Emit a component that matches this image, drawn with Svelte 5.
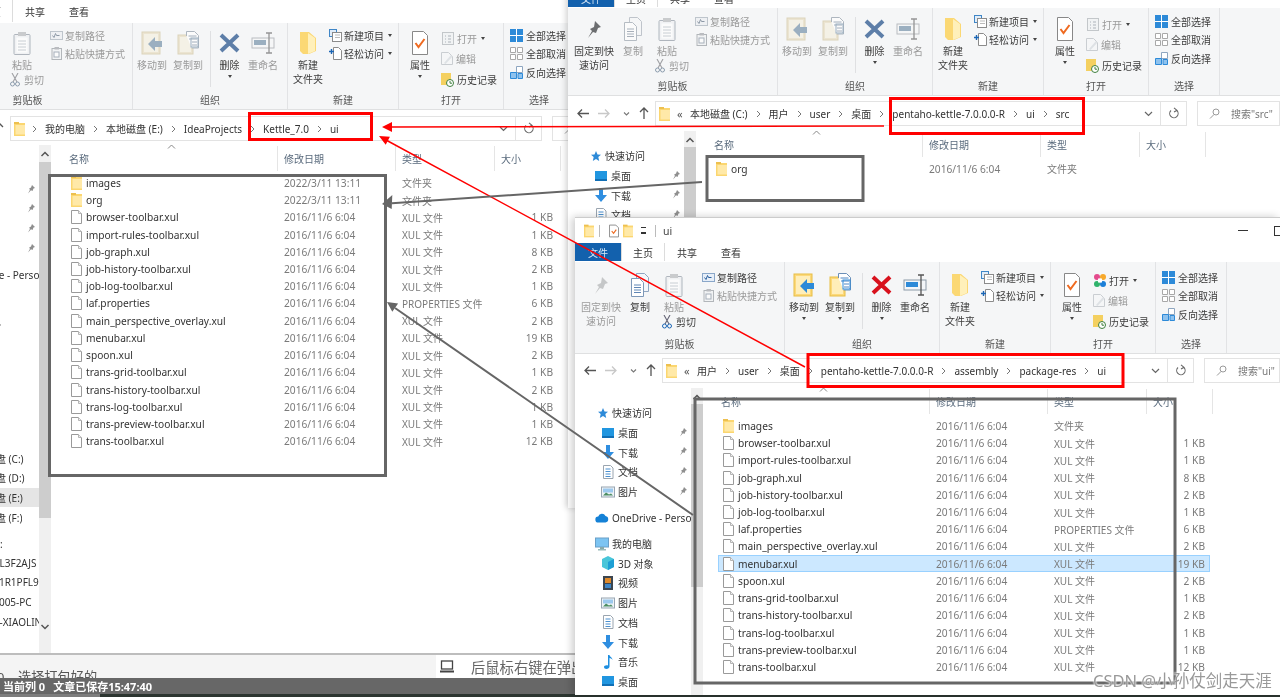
<script>
  const names = [
    ['browser-toolbar.xul','1 KB'],['import-rules-toolbar.xul','1 KB'],['job-graph.xul','8 KB'],
    ['job-history-toolbar.xul','2 KB'],['job-log-toolbar.xul','1 KB'],['laf.properties','6 KB','PROPERTIES 文件'],
    ['main_perspective_overlay.xul','2 KB'],['menubar.xul','19 KB'],['spoon.xul','2 KB'],
    ['trans-grid-toolbar.xul','1 KB'],['trans-history-toolbar.xul','2 KB'],['trans-log-toolbar.xul','1 KB'],
    ['trans-preview-toolbar.xul','1 KB'],['trans-toolbar.xul','12 KB']
  ];
  const D = '2016/11/6 6:04';
  const fileRows = names.map(([n, s, t]) => ({ n, s, t: t || 'XUL 文件', d: D, f: false }));
  const rowsA = [
    { n:'images', d:'2022/3/11 13:11', t:'文件夹', s:'', f:true },
    { n:'org', d:'2022/3/11 13:11', t:'文件夹', s:'', f:true },
    ...fileRows
  ];
  const rowsB = [{ n:'org', d:D, t:'文件夹', s:'', f:true }];
  const rowsC = [{ n:'images', d:D, t:'文件夹', s:'', f:true }, ...fileRows];

  const navBase = [
    { t:'快速访问', i:'star', l:1, w:13, h:12 },
    { t:'桌面', i:'desk', l:2, p:1 },
    { t:'下载', i:'down', l:2, p:1 },
    { t:'文档', i:'docs', l:2, p:1 },
    { t:'图片', i:'pics', l:2, p:1 },
    { t:'OneDrive - Personal', i:'cloud', l:1, g:1 },
    { t:'我的电脑', i:'pc', l:1, g:1 },
    { t:'3D 对象', i:'cube', l:2 },
    { t:'视频', i:'film', l:2 },
    { t:'图片', i:'pics', l:2 },
    { t:'文档', i:'docs', l:2 },
    { t:'下载', i:'down', l:2 },
    { t:'音乐', i:'music', l:2 },
    { t:'桌面', i:'desk', l:2 }
  ];
  const navA = [
    ...navBase,
    { t:'本地磁盘 (C:)', l:2 },{ t:'本地磁盘 (D:)', l:2 },{ t:'本地磁盘 (E:)', l:2, s:1 },{ t:'本地磁盘 (F:)', l:2 },
    { t:'网络位置:', l:1, g:1 },
    { t:'DESK-5L3F2AJS', l:2 },{ t:'DESKT-1R1PFL9', l:2 },{ t:'DESKT-005-PC', l:2 },{ t:'DESKTI-XIAOLIN', l:2 }
  ];

  const win = [
    { k:'wa', on:false, title:false, rows:rowsA, nav:navA, pre:'›', crumbs:['我的电脑','本地磁盘 (E:)','IdeaProjects','Kettle_7.0','ui'], q:'搜索"ui"', sel:'' },
    { k:'wb', on:false, title:true, rows:rowsB, nav:navBase, pre:'«', crumbs:['本地磁盘 (C:)','用户','user','桌面','pentaho-kettle-7.0.0.0-R','ui','src'], q:'搜索"src"', sel:'' },
    { k:'wc', on:true, title:true, rows:rowsC, nav:navBase, pre:'«', crumbs:['用户','user','桌面','pentaho-kettle-7.0.0.0-R','assembly','package-res','ui'], q:'搜索"ui"', sel:'menubar.xul' }
  ];
</script>

{#snippet ic(name, w, h)}
  <svg class="ic" width={w} height={h}><use href={'#' + name} /></svg>
{/snippet}

{#snippet big(cls, name, w, h, label, dim, caret, label2)}
  <div class="lg {cls}" class:dim>
    <div class="ib">{@render ic(name, w, h)}</div>
    <div class="t">{label}</div>
    {#if label2}<div class="t t2">{label2}</div>{/if}
    {#if caret}<span class="car"></span>{/if}
  </div>
{/snippet}

{#snippet small(name, label, dim, caret)}
  <div class="r" class:dim>
    <span class="slot">{@render ic(name, 13, 13)}</span><span>{label}</span>
    {#if caret}<span class="car rc"></span>{/if}
  </div>
{/snippet}

{#snippet ribbon(on)}
  <div class="ribbon">
    <section class="grp g1">
      <div class="gb">
        {@render big('w52', on ? 'pin' : 'pindark', 16, 19, '固定到快', on, false, '速访问')}
        {@render big('w26', 'copy', 20, 24, '复制', !on)}
        <div class="lg w42 dim">
          <div class="ib">{@render ic('paste', 18, 24)}</div>
          <div class="t">粘贴</div>
          <div class="cut" class:dim={!on} class:live={on}>
            {@render ic('cut', 10, 14)}<span>剪切</span>
          </div>
        </div>
        <div class="sm ml7">
          {@render small('cpath', '复制路径', !on)}
          {@render small('pshort', '粘贴快捷方式', true)}
        </div>
      </div>
      <div class="gl">剪贴板</div>
    </section>
    <section class="grp g2">
      <div class="gb">
        {@render big('w38', 'move', 22, 24, '移动到', !on, on)}
        {@render big('w34', 'cpto', 22, 24, '复制到', !on, on)}
        <span class="vsep"></span>
        <div class="lg w37 {on ? 'red' : 'slate'}">
          <div class="ib">{@render ic('cross', 21, 20)}</div>
          <div class="t">删除</div>
          <span class="car"></span>
        </div>
        {@render big('w30', 'rename', 24, 22, '重命名', !on)}
      </div>
      <div class="gl">组织</div>
    </section>
    <section class="grp g3">
      <div class="gb">
        {@render big('w40', 'nfolder', 16, 22, '新建', false, false, '文件夹')}
        <div class="sm ml1">
          {@render small('nitem', '新建项目', false, true)}
          {@render small('easy', '轻松访问', false, true)}
        </div>
      </div>
      <div class="gl">新建</div>
    </section>
    <section class="grp g4">
      <div class="gb">
        {@render big('w42', 'props', 18, 24, '属性', false, true)}
        <div class="sm tall">
          <div class="r" class:dim={!on}>
            <span class="slot s16">{@render ic(on ? 'openc' : 'openg', 14, 15)}</span><span>打开</span><span class="car rc"></span>
          </div>
          {@render small('edit', '编辑', true)}
          <div class="r"><span class="slot s16">{@render ic('hist', 13, 15)}</span><span>历史记录</span></div>
        </div>
      </div>
      <div class="gl">打开</div>
    </section>
    <section class="grp g5">
      <div class="gb">
        <div class="sm ml6">
          <div class="r"><span class="slot s16">{@render ic('sall', 13, 13)}</span><span>全部选择</span></div>
          <div class="r"><span class="slot s16">{@render ic('snone', 13, 13)}</span><span>全部取消</span></div>
          <div class="r"><span class="slot s16">{@render ic('sinv', 13, 13)}</span><span>反向选择</span></div>
        </div>
      </div>
      <div class="gl">选择</div>
    </section>
  </div>
{/snippet}

{#snippet address(w)}
  <div class="addr">
    <svg class="navarrows" width="87" height="25" viewBox="0 0 87 25">
      <path d="M21 12.5H10m4-4-4 4 4 4" fill="none" stroke="#555" stroke-width="1.3" />
      <path d="M30 12.5h11m-4-4 4 4-4 4" fill="none" stroke="#c8c8c8" stroke-width="1.3" />
      <path d="M56 11.5l2.500 2.500 2.500-2.500" fill="none" stroke="#777" stroke-width="1.100" />
      <path d="M76 18V7m-4 4 4-4 4 4" fill="none" stroke="#555" stroke-width="1.3" />
    </svg>
    <div class="box">
      <span class="fslot">{@render ic('folder', 11, 14)}</span>
      <span class="pre">
        {#if w.pre === '«'}«{:else}<svg width="5" height="8"><path d="M1 1l3 3-3 3" fill="none" stroke="#777" /></svg>{/if}
      </span>
      {#each w.crumbs as c, i}
        {#if i > 0}<svg class="chev" width="5" height="8"><path d="M1 1l3 3-3 3" fill="none" stroke="#777" /></svg>{/if}
        <span class="crumb">{c}</span>
      {/each}
      <span class="tail">
        <svg width="9" height="6"><path d="M1 1l3.500 3.500L8 1" fill="none" stroke="#666" stroke-width="1.200" /></svg>
        <span class="tdiv"></span>
        <svg width="12" height="13" viewBox="0 0 12 13"><path d="M3 3.500a4.200 4.200 0 1 0 6 .2M6 .8l3 2.500-3 1.700" fill="none" stroke="#666" stroke-width="1.100" /></svg>
      </span>
    </div>
    <div class="search">
      <svg width="11" height="11" viewBox="0 0 11 11"><circle cx="7" cy="4" r="3" fill="none" stroke="#999" /><path d="M5 6.500L1 10.500" stroke="#999" /></svg>
      <span>{w.q}</span>
    </div>
  </div>
{/snippet}

{#snippet sidebar(w)}
  <aside class="side">
    {#each w.nav as n}
      <div class="nav l{n.l}" class:gap={n.g} class:cur={n.s}>
        <span class="ni">{#if n.i}{@render ic(n.i, n.w || 14, n.h || 14)}{/if}</span>
        <span class="nt">{n.t}</span>
        {#if n.p}<span class="np">{@render ic('tack', 8, 9)}</span>{/if}
      </div>
    {/each}
  </aside>
  <div class="sbar">
    <svg class="sa" width="12" height="8"><path d="M2.500 6L6 2.500 9.500 6" fill="none" stroke="#555" stroke-width="1.500" /></svg>
    <span class="thumb"></span>
    {#if w.k === 'wa'}<svg class="sb" width="12" height="8"><path d="M2.500 2L6 5.500 9.500 2" fill="none" stroke="#555" stroke-width="1.500" /></svg>{/if}
  </div>
{/snippet}

{#snippet list(w)}
  <div class="list">
    <div class="head">
      <span class="hc h1">名称<svg class="sort" width="9" height="5"><path d="M1 4.500L4.500 1 8 4.500" fill="none" stroke="#888" /></svg></span>
      <span class="hc h2">修改日期</span>
      <span class="hc h3">类型</span>
      <span class="hc h4">大小</span>
    </div>
    {#each w.rows as f}
      <div class="row" class:sel={f.n === w.sel}>
        <span class="nm">{@render ic(f.f ? 'folder' : 'file', 11, 14)}<span>{f.n}</span></span>
        <span class="dt">{f.d}</span>
        <span class="ty">{f.t}</span>
        <span class="sz">{f.s}</span>
      </div>
    {/each}
  </div>
{/snippet}

<svg class="defs" width="0" height="0" aria-hidden="true">
  <defs>
    <symbol id="folder" viewBox="0 0 11 14"><rect y="1" width="11" height="13" fill="#fbd670" /><rect x="1.500" y="3" width="9.500" height="9.500" fill="#ffe9a8" /><rect width="5" height="2" fill="#edc04f" /></symbol>
    <symbol id="file" viewBox="0 0 11 14"><path d="M.5.5h7l3 3v10H.5z" fill="#fff" stroke="#9a9a9a" /><path d="M7.500.5v3h3" fill="#eee" stroke="#b5b5b5" /></symbol>
    <symbol id="pin" viewBox="0 0 16 19"><path d="M9 1l6 6-3 1-2 5-3-1-5 6 4-7-2-2 4-2z" fill="#a3a8ad" /></symbol>
    <symbol id="pindark" viewBox="0 0 16 19"><path d="M9 1l6 6-3 1-2 5-3-1-5 6 4-7-2-2 4-2z" fill="#6c6e70" /></symbol>
    <symbol id="copy" viewBox="0 0 20 24"><path d="M6.500.5h8l4 4v14h-12z" fill="#f4f7fb" stroke="#8fa6c1" /><path d="M1.500 5.500h8l4 4v14h-12z" fill="#fff" stroke="#7d98b8" /><path d="M4 12h7M4 14.500h7M4 17h7M4 19.500h7" stroke="#5f86b5" /></symbol>
    <symbol id="paste" viewBox="0 0 18 24"><rect x="1" y="3.500" width="16" height="20" rx="1" fill="#e9f0f8" stroke="#6f8eb2" /><rect x="3.500" y="6.500" width="11" height="15" fill="#fff" /><path d="M5 10h8M5 13h8M5 16h8M5 19h8" stroke="#9fb6d0" /><rect x="5" y="1" width="8" height="4" fill="#a9b0b7" /></symbol>
    <symbol id="cut" viewBox="0 0 10 14"><path d="M2 0l5 9M8 0L3 9" stroke="#667" stroke-width="1.100" /><circle cx="2.500" cy="11" r="2" fill="none" stroke="#1c66b5" /><circle cx="7.500" cy="11" r="2" fill="none" stroke="#1c66b5" /></symbol>
    <symbol id="cpath" viewBox="0 0 13 13"><rect x=".5" y="2.500" width="12" height="8" fill="#e6eef8" stroke="#8aa7c9" /><path d="M2.500 6.500l1.500 2 1.500-4 1 2h3" fill="none" stroke="#2a5f9e" /></symbol>
    <symbol id="pshort" viewBox="0 0 13 13"><rect x="2" y="1.500" width="9.500" height="11" fill="#eef2f7" stroke="#7d8da0" /><rect x="4.500" y="0" width="4.500" height="2.500" fill="#8c98a6" /><rect x="4" y="5" width="5" height="5" fill="#fff" stroke="#5f86b5" /></symbol>
    <symbol id="move" viewBox="0 0 22 24"><rect x="1" y="1" width="18" height="22" fill="#fcd97a" stroke="#e8bd45" /><rect x="3" y="3" width="14" height="18" fill="#ffeeb9" /><path d="M21 10h-7V6l-7 7 7 7v-4h7z" fill="#2d8ad8" /></symbol>
    <symbol id="cpto" viewBox="0 0 22 24"><rect x="1" y="4" width="15" height="19" fill="#fcd97a" stroke="#e8bd45" /><rect x="3" y="6" width="11" height="15" fill="#ffeeb9" /><path d="M9.500 5V.5h8l4 4V17h-7" fill="#fff" stroke="#6b8fb8" /><path d="M11.500 5h8M12 8h8M15 11h5M15 14h5" stroke="#4d86c4" /><rect x="14" y="7" width="7" height="9" fill="none" stroke="#2d8ad8" /></symbol>
    <symbol id="cross" viewBox="0 0 21 20"><path d="M2 2l17 16M19 2L2 18" fill="none" stroke="currentColor" stroke-width="4" /></symbol>
    <symbol id="rename" viewBox="0 0 24 22"><rect x="1" y="6" width="22" height="10" fill="#f3f6f9" stroke="#8c9aa8" /><rect x="3" y="8" width="12" height="5" fill="#2d8ad8" /><path d="M18 1v20M15 1h6M15 21h6" fill="none" stroke="#555" stroke-width="1.300" /></symbol>
    <symbol id="nfolder" viewBox="0 0 16 22"><path d="M0 0h9l7 6v13l-7 3H3L0 19z" fill="#fbd874" /><path d="M8 1l7 5v13l-7 3z" fill="#fff0ba" /></symbol>
    <symbol id="nitem" viewBox="0 0 13 13"><rect x=".5" y=".5" width="7" height="7" fill="#e1edf9" stroke="#3f86c7" /><rect x="3.500" y="3.500" width="9" height="9" fill="#fff" stroke="#8b8b8b" /><path d="M6 6h5M6 8.500h5" stroke="#bbb" /></symbol>
    <symbol id="easy" viewBox="0 0 13 13"><path d="M4.500.5h5l3 3v9h-8z" fill="#fff" stroke="#8b8b8b" /><path d="M0 4.500h5m-2.500-2.500v5" stroke="#1c66b5" stroke-width="1.400" /></symbol>
    <symbol id="props" viewBox="0 0 18 24"><path d="M1.500.5h11l4 4v19h-15z" fill="#fff" stroke="#888" /><path d="M4.500 12l3 4 6-8" fill="none" stroke="#ef6a20" stroke-width="2" /></symbol>
    <symbol id="openc" viewBox="0 0 14 15"><circle cx="4" cy="4" r="3" fill="#e44b8d" /><circle cx="10" cy="4" r="3" fill="#f7a92c" /><circle cx="10" cy="11" r="3" fill="#1b7fd8" /><circle cx="4" cy="11" r="3" fill="#2fb36b" /><rect x="5" y="5.500" width="4" height="4" fill="#fff" /></symbol>
    <symbol id="openg" viewBox="0 0 14 15"><rect x="1.500" y="1.500" width="11" height="12" fill="#eef2f7" stroke="#9aa9b9" /><path d="M4 5h1M7 5h3M4 8h1M7 8h3M4 11h1M7 11h3" stroke="#6f8aa9" /></symbol>
    <symbol id="edit" viewBox="0 0 13 13"><path d="M.5.5h7l4 4v8H.5z" fill="#f4f7fa" stroke="#a6b6c7" /><path d="M3 11l7-8 1.500 1.500-7 7.500z" fill="#c7d6e5" /></symbol>
    <symbol id="hist" viewBox="0 0 13 15"><rect y="1" width="10" height="12" fill="#f4d060" /><circle cx="9" cy="11" r="3.500" fill="#fff" stroke="#3f7f3f" /><path d="M9 9v2.200h2" fill="none" stroke="#3f7f3f" /></symbol>
    <symbol id="sall" viewBox="0 0 13 13"><rect x=".5" y=".5" width="12" height="12" fill="#2d8ad8" stroke="#2d8ad8" /><path d="M6.500 0v13M0 6.500h13" stroke="#fff" /></symbol>
    <symbol id="snone" viewBox="0 0 13 13"><path d="M.5.500h5v5h-5zM7.500.500h5v5h-5zM.5 7.500h5v5h-5zM7.500 7.500h5v5h-5z" fill="#fff" stroke="#a8a8a8" /></symbol>
    <symbol id="sinv" viewBox="0 0 13 13"><path d="M6.500.500h6v6h-6z" fill="#fff" stroke="#8ea6c0" /><path d="M.5 6.500h6v6h-6z" fill="#8ec2ee" stroke="#2d8ad8" /><path d="M8 7.500h4.500v5H8z" fill="#8ec2ee" stroke="#2d8ad8" /></symbol>
    <symbol id="star" viewBox="0 0 13 12"><path d="M8 1l1.500 3.500 3.500.3-2.700 2.300.9 3.900L8 9l-3.200 2 .9-3.900L3 4.800l3.500-.3z" fill="#2d8ad8" /></symbol>
    <symbol id="desk" viewBox="0 0 14 14"><rect x="1" y="2" width="12" height="10" fill="#2196e0" /><rect x="1" y="10" width="12" height="2" fill="#116fb5" /></symbol>
    <symbol id="down" viewBox="0 0 14 14"><path d="M5 0h4v7h4l-6 7-6-7h4z" fill="#2f8ee0" /></symbol>
    <symbol id="docs" viewBox="0 0 14 14"><path d="M2.500.500h7l2.500 2.500v10.500h-9.500z" fill="#fff" stroke="#9aa5b0" /><path d="M4.500 4h5M4.500 6.500h5M4.500 9h5M4.500 11.500h5" stroke="#4a90d0" /></symbol>
    <symbol id="pics" viewBox="0 0 14 14"><rect x=".5" y="2" width="13" height="10" fill="#eef3f7" stroke="#98a5b2" /><rect x="2" y="3.500" width="10" height="4" fill="#9cc9ee" /><path d="M2 10.500l3-3 3 2 2-1 2 2z" fill="#4b8d62" /></symbol>
    <symbol id="cloud" viewBox="0 0 14 14"><path d="M3.500 11.500a3 3 0 0 1-.3-6A4 4 0 0 1 10.500 5a3.300 3.300 0 0 1 0 6.500z" fill="#1581d6" /></symbol>
    <symbol id="pc" viewBox="0 0 14 14"><rect x=".5" y="1" width="13" height="9" fill="#7cc4f2" stroke="#6aa0c8" /><rect x="5" y="10" width="4" height="2" fill="#8aa" /><rect x="3" y="12" width="8" height="1.500" fill="#9bb" /></symbol>
    <symbol id="cube" viewBox="0 0 14 14"><path d="M7 0l6 3v8l-6 3-6-3V3z" fill="#49c6d9" /><path d="M7 6l6-3v8l-6 3z" fill="#1d9fd5" /></symbol>
    <symbol id="film" viewBox="0 0 14 14"><rect x="2" y="0" width="10" height="14" fill="#3c4650" /><rect x="4" y="2" width="6" height="5" fill="#e08a2a" /><rect x="4" y="8" width="6" height="4" fill="#3f86c7" /></symbol>
    <symbol id="music" viewBox="0 0 14 14"><path d="M7 0h1.500c.3 2 3 2.500 3 5-1-1.500-2-1.800-3-2v8.500c0 1.500-1.500 2.500-3 2.500S3 13 3 12s1.500-2 4-1.500z" fill="#1d8ee0" /></symbol>
    <symbol id="tack" viewBox="0 0 8 9"><path d="M5 0l3 3-1.500.5-1 2.500-1.500-.7L1 8.500l2-3.700-1-1L4 2.500z" fill="#8f8f8f" /></symbol>
    <symbol id="qdoc" viewBox="0 0 11 14"><path d="M.5.5h7l3 3v10H.5z" fill="#fff" stroke="#888" /><path d="M3 7l2 2.500 3-4" fill="none" stroke="#ef6a20" stroke-width="1.300" /></symbol>
  </defs>
</svg>

<main class="page">
  <div class="base">
    <div class="basefill"></div>
    <div class="strip">
      <div class="strip-l"><span class="z">0</span><span class="pk">选择打包好的</span></div>
      <div class="strip-r">
        <svg width="14" height="13" viewBox="0 0 14 13"><rect x="1.500" y="1" width="11" height="8" fill="#fff" stroke="#444" stroke-width="1.300" /><rect y="10.500" width="14" height="2" fill="#444" /></svg>
        <span>后鼠标右键在弹出</span>
      </div>
    </div>
    <div class="status"><span>当前列 0</span><span>文章已保存15:47:40</span></div>
    <div class="taskbar"></div>
  </div>

  {#each win as w}
    <article class="win {w.k}" class:on={w.on}>
      {#if w.title}
        <div class="title">
          {@render ic('folder', 10, 14)}
          <span class="tsep"></span>
          {@render ic('qdoc', 10, 14)}
          {@render ic('folder', 10, 14)}
          <span class="tcar"></span>
          <span class="tsep sm2"></span>
          <span class="tname">ui</span>
          <svg class="wmin" width="10" height="2"><rect width="10" height="1" fill="#333" /></svg>
          <svg class="wmax" width="10" height="10"><rect x=".5" y=".5" width="9" height="9" fill="none" stroke="#333" /></svg>
        </div>
      {/if}
      <div class="tabs">
        <span class="tab file">文件</span>
        <span class="tab cur">主页</span>
        <span class="tab">共享</span>
        <span class="tab">查看</span>
      </div>
      {@render ribbon(w.on)}
      {@render address(w)}
      <div class="body">
        {@render sidebar(w)}
        {@render list(w)}
      </div>
    </article>
  {/each}

  <svg class="marks" width="1280" height="697" viewBox="0 0 1280 697">
    <g fill="none" stroke="#666" stroke-width="3">
      <rect x="49.500" y="175.500" width="336" height="300" />
      <rect x="707" y="156.500" width="156" height="44" />
      <rect x="695" y="399" width="480" height="284" />
    </g>
    <g fill="none" stroke="#f00" stroke-width="3">
      <rect x="249.500" y="113.500" width="122" height="26" />
      <rect x="890.500" y="98.500" width="193" height="35" />
      <rect x="808" y="354.500" width="315" height="32" />
    </g>
    <path d="M884 126L390 127M805 367L386 140" stroke="#f00" stroke-width="1.500" fill="none" />
    <path d="M702 182L392 203.300M693 515L395 308" stroke="#666" stroke-width="2" fill="none" />
    <path d="M382 127l10-5v10zM379 136l10.900.8-4.200 8z" fill="#f00" />
    <path d="M382 204l10.300-9 -.6 14zM387 302l11.100 1.600-5.800 8.200z" fill="#666" />
  </svg>

  <div class="mark">CSDN @小孙仗剑走天涯</div>
</main>

<style>
  :global(body) { margin: 0; background: #fff; }
  .defs { position: absolute; }
  .page {
    position: relative; width: 1280px; height: 697px; overflow: hidden; background: #fff;
    font-family: "Noto Sans", "Noto Sans CJK SC", sans-serif; font-size: 10px; color: #3c3c3c;
    filter: blur(.45px);
  }
  .base { display: flex; flex-direction: column; height: 697px; }
  .basefill { height: 653px; flex: none; border-bottom: 2px solid #bdbdbd; background: #fff; }
  .strip { height: 23px; display: flex; flex: none; overflow: hidden; background: #f4f4f4; }
  .strip-l { width: 436px; font-size: 13px; color: #555; position: relative; }
  .strip-l .z { position: absolute; left: -3px; top: 13px; }
  .strip-l .pk { position: absolute; left: 18px; top: 12px; font-size: 13.200px; }
  .strip-r { flex: 1; background: #fff; display: flex; align-items: center; gap: 17px; padding-left: 4px; font-size: 14.300px; color: #666; white-space: nowrap; overflow: hidden; }
  .status { height: 16px; flex: none; background: #676767; color: #fff; font-weight: 700; font-size: 11px; display: flex; gap: 8px; align-items: center; padding-left: 3px; }
  .taskbar { flex: 1; background: linear-gradient(90deg, #7d7d7d 0 100px, #2c3530 100px); }

  .win { position: absolute; background: #fff; overflow: hidden; display: flex; flex-direction: column; box-sizing: border-box; }
  .wa { left: -77px; top: 0; width: 655px; height: 653px; --tabh: 23px; --rh: 87px; --pt: 8px; --ab: 6px; --adh: 35px; --thumb: 356px; }
  .wb { left: 568px; top: -36px; width: 712px; height: 544px; --tabh: 19px; --rh: 88px; --pt: 9px; --ab: 5px; --adh: 35px; --thumb: 300px; box-shadow: -2px 0 6px rgba(0,0,0,.18); }
  .wc { left: 575px; top: 217px; width: 705px; height: 478px; --tabh: 19px; --rh: 92px; --pt: 11px; --ab: 4px; --adh: 34px; --thumb: 183px; box-shadow: -3px 0 8px rgba(0,0,0,.2); border-top: 1px solid #ccc; }

  .title { height: 25px; flex: none; display: flex; align-items: center; gap: 4px; padding-left: 9px; position: relative; flex-shrink: 0; }
  .tsep { width: 1px; height: 12px; background: #bbb; margin: 0 5px 0 1px; }
  .tsep.sm2 { margin: 0 3px 0 5px; }
  .tcar { width: 5px; height: 4px; border-top: 1px solid #333; border-bottom: 2px solid #333; margin-left: 4px; }
  .tname { font-size: 10.500px; color: #444; }
  .wmin { margin-left: auto; }
  .wmax { margin: 0 -4px 0 22px; }

  .tabs { height: var(--tabh); flex: none; display: flex; align-items: center; background: #fff; padding-bottom: 1px; box-sizing: border-box; }
  .tab { width: 44px; text-align: center; font-size: 10px; color: #333; align-self: stretch; display: flex; align-items: center; justify-content: center; box-sizing: border-box; }
  .tab.file { width: 46px; background: #1361ad; color: #d8e8f6; }
  .tab.cur { border-right: 1px solid #dcdcdc; border-left: 1px solid #dcdcdc; }

  .ribbon { display: flex; height: var(--rh); flex: none; background: #f5f6f7; border-bottom: 1px solid #dfe0e1; box-sizing: border-box; }
  .grp { display: flex; flex-direction: column; flex: none; box-sizing: border-box; border-right: 1px solid #e2e3e5; }
  .g1 { width: 210px; } .g2 { width: 155px; } .g3 { width: 111px; } .g4 { width: 105px; } .g5 { width: 71px; }
  .gb { flex: 1; min-height: 0; display: flex; padding-top: var(--pt); }
  .gl { height: 18px; flex: none; line-height: 18px; text-align: center; color: #555; }
  .lg { display: flex; flex-direction: column; align-items: center; flex: none; white-space: nowrap; color: #3c3c3c; }
  .ib { height: 24px; display: flex; align-items: center; justify-content: center; }
  .t { margin-top: 3px; line-height: 14px; }
  .t2 { margin-top: 0; }
  .w52 { width: 52px; } .w26 { width: 26px; } .w42 { width: 42px; } .w38 { width: 38px; }
  .w34 { width: 34px; } .w37 { width: 37px; } .w30 { width: 30px; } .w40 { width: 40px; }
  .dim { color: #9a9a9a; }
  .dim .ic { opacity: .6; filter: saturate(.35); }
  .cut { display: flex; gap: 4px; align-self: flex-start; margin: 1px 0 0 9px; align-items: center; line-height: 14px; }
  .cut.live { color: #3c3c3c; }
  .cut.live .ic { opacity: 1; filter: none; }
  .red { color: #3c3c3c; }
  .red .ic { color: #d8121d; }
  .slate { color: #3c3c3c; }
  .slate .ic { color: #5d7ea8; }
  .vsep { width: 1px; height: 56px; background: #dfe0e2; margin-left: 5px; flex: none; }
  .car { width: 0; height: 0; border-left: 2.500px solid transparent; border-right: 2.500px solid transparent; border-top: 3px solid #444; margin-top: 3px; flex: none; }
  .rc { margin: 0 0 0 4px; }
  .sm { display: flex; flex-direction: column; margin-top: -5px; }
  .sm.tall { margin-top: -3px; }
  .sm.tall .r { height: 20.500px; }
  .r { display: flex; align-items: center; height: 18.500px; white-space: nowrap; color: #3c3c3c; }
  .r.dim { color: #9a9a9a; }
  .slot { width: 15px; flex: none; display: flex; align-items: center; }
  .s16 { width: 16px; }
  .ml7 { margin-left: 7px; } .ml1 { margin-left: 1px; } .ml6 { margin-left: 6px; }

  .addr { height: var(--adh); flex: none; display: flex; align-items: flex-start; padding-top: var(--ab); box-sizing: border-box; background: #fff; }
  .navarrows { flex: none; }
  .box { width: 532px; height: 25px; flex: none; box-sizing: border-box; border: 1px solid #e3e3e3; display: flex; align-items: center; position: relative; }
  .fslot { width: 11px; margin-left: 3px; display: flex; flex: none; }
  .pre { width: 20px; flex: none; padding-left: 7px; box-sizing: border-box; color: #555; font-size: 11px; display: flex; align-items: center; }
  .crumb { white-space: nowrap; font-size: 10px; color: #333; }
  .chev { margin: 0 8px; flex: none; }
  .tail { position: absolute; right: 0; top: 0; bottom: 0; display: flex; align-items: center; gap: 7px; padding-right: 6px; }
  .tdiv { width: 1px; align-self: stretch; background: #e3e3e3; }
  .search { margin-left: 10px; flex: 1; height: 25px; box-sizing: border-box; border: 1px solid #e3e3e3; display: flex; align-items: center; gap: 6px; padding-left: 11px; color: #777; white-space: nowrap; }
  .search span { margin-left: 5px; }

  .body { flex: 1; min-height: 0; display: flex; }
  .side { width: 116px; flex: none; padding-top: 15px; box-sizing: border-box; overflow: hidden; }
  .nav { display: flex; align-items: center; height: 19.700px; white-space: nowrap; position: relative; color: #333; }
  .nav.gap { margin-top: 6.300px; }
  .nav.cur { background: #e5e5e5; }
  .nav .ni { flex: none; display: flex; }
  .l1 .ni { width: 17px; margin-left: 20px; }
  .l2 .ni { width: 17px; margin-left: 26px; }
  .nt { font-size: 10px; overflow: hidden; }
  .np { position: absolute; left: 104px; top: 5px; display: flex; }
  .sbar { width: 12px; flex: none; background: #f0f0f0; display: flex; flex-direction: column; align-items: stretch; }
  .sa { margin: 5px 0 4px; flex: none; }
  .thumb { height: var(--thumb); background: #cdcdcd; flex: none; }
  .sb { margin-top: 105px; flex: none; }
  .wb .sa, .wc .sa { margin-bottom: 3px; }

  .list { flex: 1; min-width: 0; position: relative; }
  .head { height: 26px; display: flex; padding-top: 1px; box-sizing: border-box; margin-bottom: 3.300px; }
  .hc { box-sizing: border-box; display: flex; align-items: center; padding-left: 6px; color: #5a6b7d; border-right: 1px solid #e5e5e5; position: relative; }
  .h1 { width: 227px; padding-left: 18px; }
  .h2 { width: 118px; }
  .h3 { width: 99px; }
  .h4 { width: 66px; }
  .sort { position: absolute; left: 116px; top: -2px; }
  .row { display: grid; grid-template-columns: 212px 118px 99px 63px; width: 492px; margin-left: 15px; height: 17.220px; align-items: center; font-size: 10.200px; box-sizing: border-box; white-space: nowrap; color: #8a8a8a; }
  .row.sel { background: #cce8ff; outline: 1px solid #99d1ff; outline-offset: -1px; }
  .nm { display: flex; align-items: center; gap: 4px; padding-left: 5px; color: #333; }
  .dt { padding-left: 6px; color: #7a7a7a; }
  .ty { padding-left: 6px; color: #7a7a7a; font-size: 10px; }
  .sz { text-align: right; padding-right: 5px; color: #7a7a7a; }

  .marks { position: absolute; left: 0; top: 0; pointer-events: none; }
  .mark { position: absolute; left: 1093px; top: 669px; font-size: 16.500px; line-height: 24px; color: #999; white-space: nowrap; text-shadow: 0 0 2px #fff, 0 0 2px #fff; }
</style>
